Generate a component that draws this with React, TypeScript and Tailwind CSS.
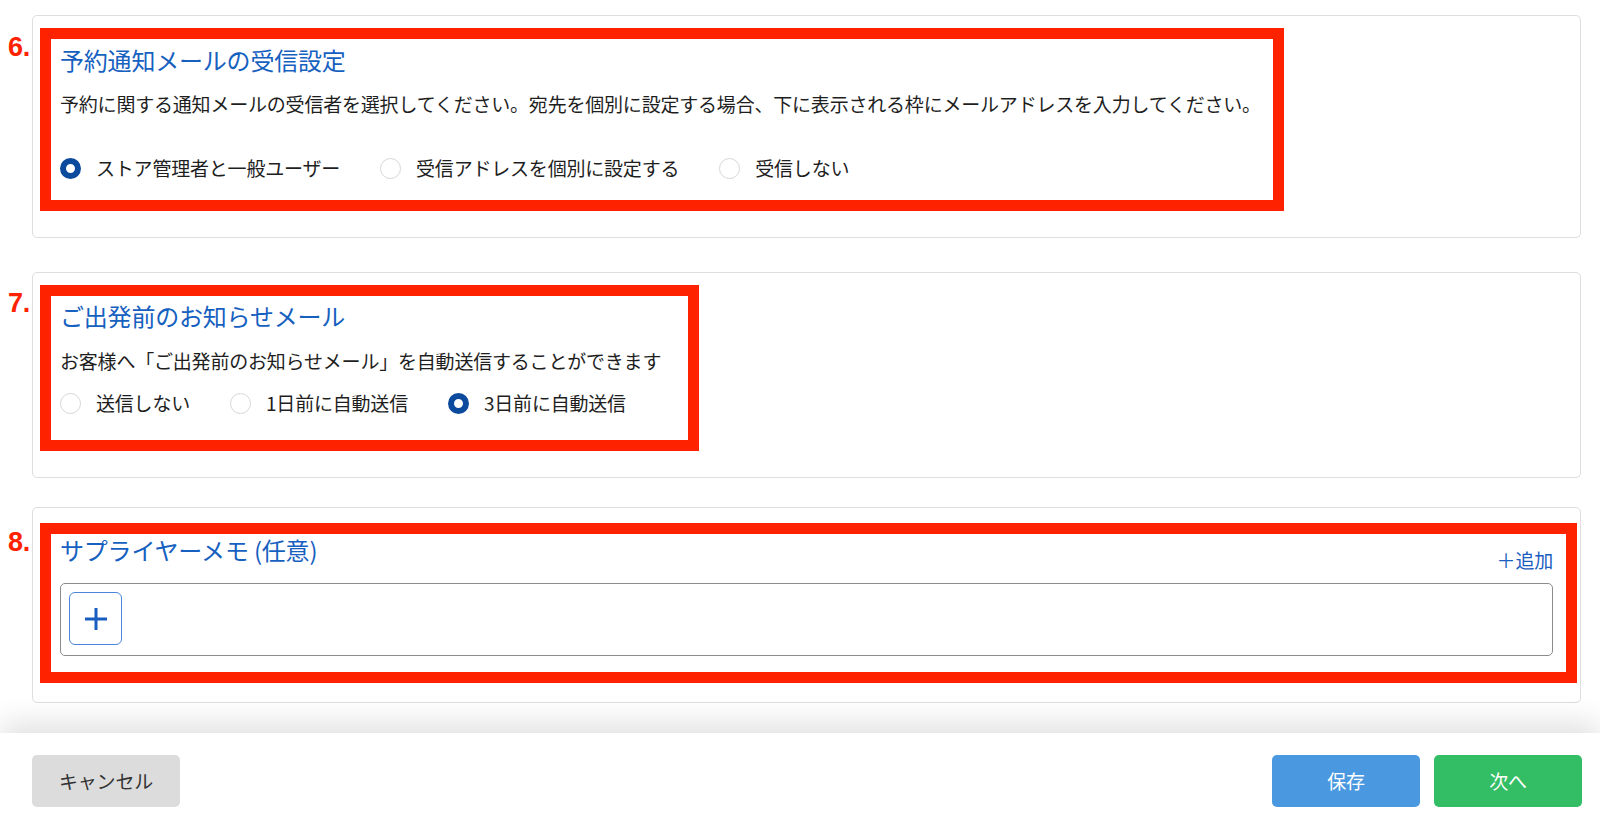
import { ReactNode } from 'react';

const font = "font-['Noto_Sans_CJK_JP','Liberation_Sans',sans-serif]";

function Radio({ checked, label }: { checked?: boolean; label: string }) {
  return (
    <label className="flex items-center gap-[15px]">
      {checked ? (
        <span className="h-[21px] w-[21px] shrink-0 rounded-full border-[6px] border-[#0c4a9e] bg-white" />
      ) : (
        <span className="h-[21px] w-[21px] shrink-0 rounded-full border border-[#d6d6d6] bg-white" />
      )}
      <span className="whitespace-nowrap leading-[28px]">{label}</span>
    </label>
  );
}

function Marker({ n, top }: { n: string; top: string }) {
  return (
    <span
      className={`absolute left-[-32px] ${top} font-['Liberation_Sans',sans-serif] text-[27px] font-bold leading-none text-[#ff2200]`}
    >
      {n}
    </span>
  );
}

function Title({ children }: { children: ReactNode }) {
  return <h2 className="whitespace-nowrap text-[24px] font-normal leading-[32px] text-[#1660c0]">{children}</h2>;
}

export default function App() {
  return (
    <div className={`flex h-screen flex-col overflow-hidden bg-white text-[19px] tracking-[-0.2px] text-[#1e1e1e] ${font}`}>
      <main className="flex-1 overflow-hidden pl-8 pr-[19px] pt-[15px]">
        {/* 6. reservation mail */}
        <section className="rounded-[5px] border border-[#dedede] bg-white pb-[26px] pl-[7px] pt-[12px]">
          <div className="relative w-[1244px]">
            <Marker n="6." top="top-[6px]" />
            <div className="h-[183px] border-[11px] border-[#ff2200] pl-[9px] pt-[5px]">
              <Title>予約通知メールの受信設定</Title>
              <p className="mt-[14px] whitespace-nowrap leading-[28px]">
                予約に関する通知メールの受信者を選択してください。宛先を個別に設定する場合、下に表示される枠にメールアドレスを入力してください。
              </p>
              <div className="mt-[36px] flex gap-10">
                <Radio checked label="ストア管理者と一般ユーザー" />
                <Radio label="受信アドレスを個別に設定する" />
                <Radio label="受信しない" />
              </div>
            </div>
          </div>
        </section>

        {/* 7. departure notice */}
        <section className="mt-[34px] rounded-[5px] border border-[#dedede] bg-white pb-[26px] pl-[7px] pt-[12px]">
          <div className="relative w-[659px]">
            <Marker n="7." top="top-[5px]" />
            <div className="h-[166px] border-[11px] border-[#ff2200] pl-[9px] pt-[4px]">
              <Title>ご出発前のお知らせメール</Title>
              <p className="mt-[15px] whitespace-nowrap leading-[28px]">
                お客様へ「ご出発前のお知らせメール」を自動送信することができます
              </p>
              <div className="mt-[14px] flex gap-10">
                <Radio label="送信しない" />
                <Radio label="1日前に自動送信" />
                <Radio checked label="3日前に自動送信" />
              </div>
            </div>
          </div>
        </section>

        {/* 8. supplier memo */}
        <section className="mt-[29px] rounded-[5px] border border-[#dedede] bg-white pb-[19px] pl-[7px] pt-[15px]">
          <div className="relative w-[1537px]">
            <Marker n="8." top="top-[6px]" />
            <div className="h-[160px] border-[11px] border-[#ff2200] pl-[9px] pr-[13px]">
              <div className="flex items-start justify-between">
                <Title>サプライヤーメモ (任意)</Title>
                <button className="mt-[14px] leading-[24px] text-[#1a5dc0]">＋追加</button>
              </div>
              <div className="mt-[11px] h-[73px] rounded-[5px] border border-[#8c8c8c] p-2">
                <button className="flex h-[53px] w-[53px] items-center justify-center rounded-[6px] border-[1.5px] border-[#4a86dc] bg-white">
                  <svg width="22" height="22" viewBox="0 0 22 22" fill="none">
                    <path d="M0 11h22M11 0v22" stroke="#1a5dc0" strokeWidth="3" />
                  </svg>
                </button>
              </div>
            </div>
          </div>
        </section>
      </main>

      <footer className="relative z-10 flex h-[88px] shrink-0 items-start justify-between bg-white pl-8 pr-[18px] pt-[22px] shadow-[0_-10px_30px_rgba(0,0,0,0.12)]">
        <button className="h-[52px] w-[148px] rounded-[5px] bg-[#dcdcdc] text-[#333]">キャンセル</button>
        <div className="flex gap-[14px]">
          <button className="h-[52px] w-[148px] rounded-[5px] bg-[#4a98e0] text-white">保存</button>
          <button className="h-[52px] w-[148px] rounded-[5px] bg-[#33bd65] text-white">次へ</button>
        </div>
      </footer>
    </div>
  );
}
